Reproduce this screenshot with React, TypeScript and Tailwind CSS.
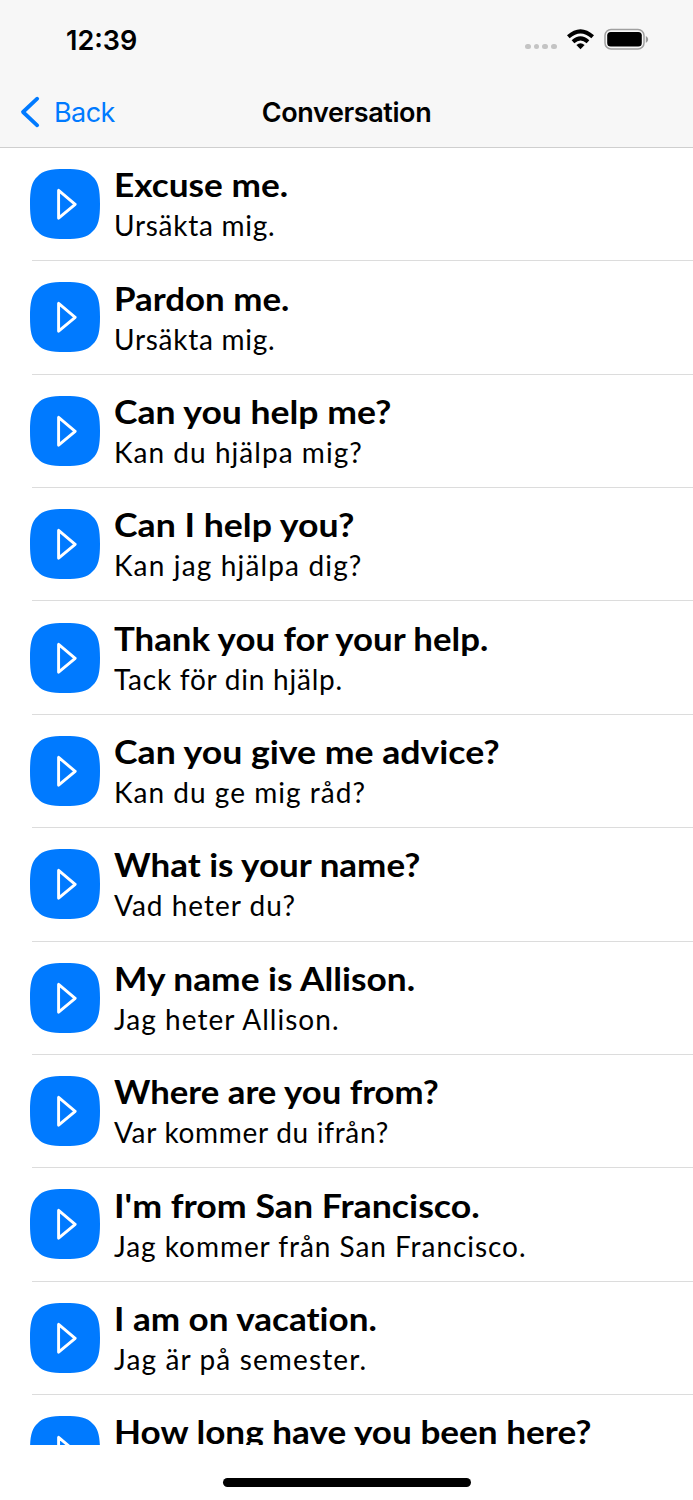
type Phrase = {
  english: string;
  swedish?: string;
  englishWidth: string;
  swedishSpacing?: string;
};

const phrases: Phrase[] = [
  { english: "Excuse me.", swedish: "Ursäkta mig.", englishWidth: "scale-x-[1.1]", swedishSpacing: "tracking-[0.73px]" },
  { english: "Pardon me.", swedish: "Ursäkta mig.", englishWidth: "scale-x-[1.09]", swedishSpacing: "tracking-[0.73px]" },
  { english: "Can you help me?", swedish: "Kan du hjälpa mig?", englishWidth: "scale-x-[1.11]", swedishSpacing: "tracking-[1.04px]" },
  { english: "Can I help you?", swedish: "Kan jag hjälpa dig?", englishWidth: "scale-x-[1.114]", swedishSpacing: "tracking-[1.15px]" },
  { english: "Thank you for your help.", swedish: "Tack för din hjälp.", englishWidth: "scale-x-[1.087]", swedishSpacing: "tracking-[0.76px]" },
  { english: "Can you give me advice?", swedish: "Kan du ge mig råd?", englishWidth: "scale-x-[1.113]", swedishSpacing: "tracking-[1.03px]" },
  { english: "What is your name?", swedish: "Vad heter du?", englishWidth: "scale-x-[1.093]", swedishSpacing: "tracking-[1px]" },
  { english: "My name is Allison.", swedish: "Jag heter Allison.", englishWidth: "scale-x-[1.103]", swedishSpacing: "tracking-[1.04px]" },
  { english: "Where are you from?", swedish: "Var kommer du ifrån?", englishWidth: "scale-x-[1.085]", swedishSpacing: "tracking-[0.7px]" },
  { english: "I'm from San Francisco.", swedish: "Jag kommer från San Francisco.", englishWidth: "scale-x-[1.116]", swedishSpacing: "tracking-[0.95px]" },
  { english: "I am on vacation.", swedish: "Jag är på semester.", englishWidth: "scale-x-[1.096]", swedishSpacing: "tracking-[1.13px]" },
  { english: "How long have you been here?", englishWidth: "scale-x-[1.098]" },
];

function PlayButton() {
  return (
    <button className="block h-[70px] w-[70px] shrink-0" aria-label="Play">
      <svg viewBox="0 0 70 70" className="h-[70px] w-[70px]">
        <path
          d="M35 0C49 0 57.500 1.500 62.500 7.500C68.500 12.500 70 21 70 35C70 49 68.500 57.500 62.500 62.500C57.500 68.500 49 70 35 70C21 70 12.500 68.500 7.500 62.500C1.500 57.500 0 49 0 35C0 21 1.500 12.500 7.500 7.500C12.500 1.500 21 0 35 0Z"
          fill="#007aff"
        />
        <path d="M28.600 21.400V49.200L45.200 35.300Z" fill="none" stroke="#fff" strokeWidth="2.900" strokeLinejoin="round" />
      </svg>
    </button>
  );
}

function StatusBar() {
  return (
    <div className="flex h-[78px] items-start justify-between pl-[66px] pr-[44px]">
      <span className="mt-[23px] text-[27px] leading-9 font-semibold">12:39</span>
      <div className="mt-[28px] flex items-start">
        <div className="mt-[15.500px] mr-[1.500px] flex gap-[3px]">
          {[0, 1, 2, 3].map((dot) => (
            <span key={dot} className="h-[5.600px] w-[5.600px] rounded-full bg-[#c4c4c4]" />
          ))}
        </div>
        <svg viewBox="0 0 27 21" className="ml-[9px] mt-px h-[21px] w-[27px]">
          <g fill="none" stroke="#000" strokeWidth="4">
            <path d="M1.300 7.800Q13.500-3.200 25.700 7.800" />
            <path d="M6 12.800Q13.500 6.100 21 12.800" />
          </g>
          <path d="M9.400 16Q13.500 12.600 17.600 16L13.500 20.300Z" />
        </svg>
        <svg viewBox="0 0 45 22" className="ml-[10px] h-[22px] w-[45px]">
          <rect x="1" y="1.500" width="39" height="19.400" rx="6" fill="none" stroke="#a0a0a0" strokeWidth="1.500" />
          <rect x="3.200" y="4" width="34.600" height="14.600" rx="3.500" />
          <path d="M41.800 8C44.900 9.400 44.900 13.400 41.800 14.800Z" fill="#999" />
        </svg>
      </div>
    </div>
  );
}

function NavigationBar() {
  return (
    <nav className="grid h-[69px] grid-cols-[1fr_auto_1fr] items-center text-[27px] leading-9">
      <a className="flex items-center pl-[20px] text-[#007aff]">
        <svg viewBox="0 0 20 32" className="-mt-0.5 h-8 w-5">
          <path d="M17.200 2.700L3 16L17.200 29.300" fill="none" stroke="currentColor" strokeWidth="3.800" strokeLinecap="round" strokeLinejoin="round" />
        </svg>
        <span className="ml-[14px] tracking-[-0.6px]">Back</span>
      </a>
      <h1 className="font-semibold tracking-[-0.4px]">Conversation</h1>
      <span />
    </nav>
  );
}

function PhraseRow({ phrase }: { phrase: Phrase }) {
  return (
    <li className="flex h-[113.360px] pl-[30px]">
      <div className="pt-[21.100px]">
        <PlayButton />
      </div>
      <div className="-ml-[68px] flex-1 border-b border-[#dcdcdc] pl-[82px] pt-[17.300px]">
        <p className={`w-max origin-left text-[32px] leading-10 font-bold whitespace-nowrap [font-variant-ligatures:none] ${phrase.englishWidth}`}>
          {phrase.english}
        </p>
        {phrase.swedish && (
          <p className={`text-[28px] leading-10 whitespace-nowrap ${phrase.swedishSpacing}`}>{phrase.swedish}</p>
        )}
      </div>
    </li>
  );
}

export default function App() {
  return (
    <div className="flex h-[1500px] w-[693px] flex-col overflow-hidden bg-white font-[Inter,sans-serif] text-black">
      <header className="h-[148px] shrink-0 border-b border-[#cfcfcf] bg-[#f7f7f7]">
        <StatusBar />
        <NavigationBar />
      </header>
      <ul className="h-[1297px] shrink-0 overflow-hidden font-[Lato,sans-serif]">
        {phrases.map((phrase) => (
          <PhraseRow key={phrase.english} phrase={phrase} />
        ))}
      </ul>
      <div className="mx-auto mt-[33px] h-[9px] w-[248px] rounded-full bg-black" />
    </div>
  );
}
